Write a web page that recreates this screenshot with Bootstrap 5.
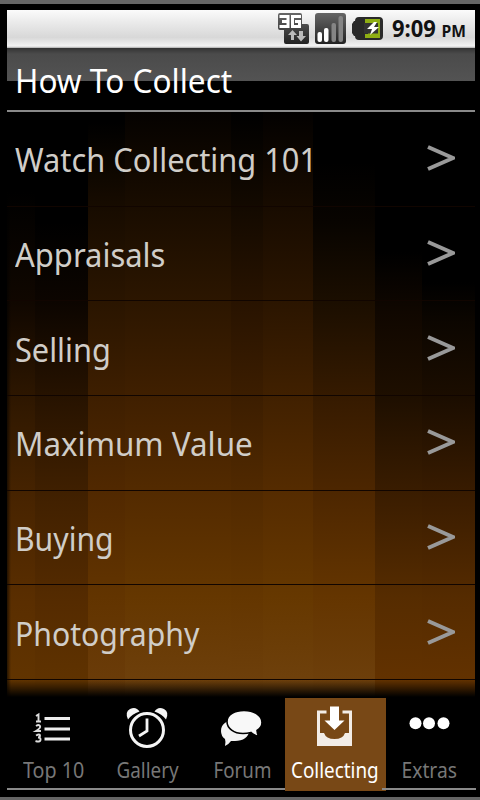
<!DOCTYPE html>
<html lang="en">
<head>
<meta charset="utf-8">
<meta name="viewport" content="width=device-width, initial-scale=1">
<title>How To Collect</title>
<link href="https://cdn.jsdelivr.net/npm/bootstrap@5.3.0/dist/css/bootstrap.min.css" rel="stylesheet">
<style>
body{font-family:"Noto Sans","Open Sans",sans-serif;background:#000;width:480px;height:800px}
.phone{width:480px;height:800px;background:#000;border-top:4px solid #666;border-bottom:3px solid #666;padding:6px 5px 0 7px}
.status{height:38px;background:linear-gradient(#fbfbfb 0,#e9e9e9 35%,#d8d8d8 72%,#e3e3e3 82%,#f3f3f3 95%,#aaa 100%);color:#111;padding-right:9px}
.clock{font:bold 22.5px/38px "Open Sans","Noto Sans",sans-serif;margin-top:1px}
.clock small{font-size:16px}
.titlebar{height:64px;background:linear-gradient(#333 0,#4b4b4b 6px,#535353 33px,#000 33px);border-bottom:2px solid #8a8a8a;padding-left:7.5px}
.fit{display:inline-block;transform-origin:left center;white-space:nowrap}
.titlebar .fit{font-size:32px;line-height:44px;color:#fff;margin-top:11px}
.topics{height:586px;
background:
linear-gradient(transparent 568px,#000 585px),
linear-gradient(90deg,#0009,transparent 4px) 0 0/4px 100% no-repeat,
linear-gradient(#000 80px,#100700 190px,#321900 300px,#482400 390px,#5a2e00 490px,#623500 586px) 0 0/28px 100% no-repeat,
linear-gradient(#000 110px,#0c0500 190px,#2b1500 300px,#422100 390px,#552b00 490px,#613400 586px) 28px 0/53px 100% no-repeat,
linear-gradient(#000 10px,#160b00 90px,#2a1500 190px,#3f1f00 290px,#522900 385px,#623400 485px,#6c3d0a 586px) 81px 0/37px 100% no-repeat,
linear-gradient(#050200 0,#180c00 90px,#2c1600 190px,#412000 290px,#542b00 385px,#653700 485px,#6f410d 586px) 118px 0/106px 100% no-repeat,
linear-gradient(#000 0,#120900 90px,#281300 190px,#3d1e00 290px,#522a00 385px,#643600 485px,#6f410d 586px) 224px 0/32px 100% no-repeat,
linear-gradient(#030100 0,#170b00 90px,#2b1500 190px,#422100 290px,#562c00 385px,#663800 485px,#70420e 586px) 256px 0/50px 100% no-repeat,
linear-gradient(#000 50px,#080400 110px,#1b0e00 190px,#371b00 290px,#4e2700 385px,#643500 485px,#6f410d 586px) 306px 0/62px 100% no-repeat,
linear-gradient(#000 140px,#100700 200px,#1e0f00 285px,#3b1d00 385px,#562c00 485px,#653300 586px) 368px 0/47px 100% no-repeat,
linear-gradient(#000 170px,#0c0600 210px,#1b0d00 285px,#3a1c00 385px,#552b00 485px,#653300 586px) 415px 0/100px 100% no-repeat}
.topic{height:94.65px;border-bottom:1px solid #110500;padding:3px 20px 0 7.5px;color:#d0cdc8;text-decoration:none}
.topic .fit{font-size:32px;line-height:44px}
.topic svg{margin-top:-4px}
.tabs{height:92px}
.tab{flex:0 0 93.6px;height:92px;border-bottom:2px solid #8a8a8a;color:#777;text-decoration:none;font-size:21px;line-height:28px}
.tab.current{flex-basis:101px;margin:0 -3.7px 0 -4.3px;background:#784816;color:#fff;height:93px;border:0}
.tab.current + .tab{flex-basis:91px}
.tab svg{height:58px;width:94px}
.tab .fit{transform-origin:center}
</style>
</head>
<body>
<div class="phone d-flex flex-column overflow-hidden">
  <header class="status d-flex align-items-center justify-content-end flex-shrink-0">
    <svg width="110" height="38" viewBox="0 0 110 38" class="me-1 flex-shrink-0" aria-hidden="true">
      <defs><linearGradient id="g" x2="0" y2="1"><stop stop-color="#666"/><stop offset="1" stop-color="#222"/></linearGradient></defs>
      <path d="M4 3H24a2 2 0 0 1 2 2V14h5a2 2 0 0 1 2 2V32a2 2 0 0 1-2 2H10a2 2 0 0 1-2-2V20H4a2 2 0 0 1-2-2V5a2 2 0 0 1 2-2z" fill="url(#g)"/>
      <path d="M3.500 6.500h8.500v10H3.500M6 11.500h6M25 6.500H16.500V16.500h7v-5H19" fill="none" stroke="#fff" stroke-width="3"/>
      <path d="M15 30V25H12L16.500 20L21 25H18V30zM23 21h4v5h3l-5 5.500L20.500 26H23z" fill="#bbb"/>
      <rect x="39" y="3" width="31" height="31" rx="3" fill="url(#g)"/>
      <rect x="41.500" y="22" width="4.500" height="10" rx="2" fill="#fff"/><rect x="48" y="18" width="4.500" height="14" rx="2" fill="#fff"/><rect x="55.500" y="13" width="4.500" height="19" rx="2" fill="#858585"/><rect x="62.500" y="6" width="4.500" height="26" rx="2" fill="#858585"/>
      <path d="M83 7H103a4 4 0 0 1 4 4V26a4 4 0 0 1-4 4H83a4 4 0 0 1-4-4h-1l-2-3V14l2-3h1a4 4 0 0 1 4-4z" fill="#292929"/>
      <path d="M89 9h15v19H89V24h3V13h-3z" fill="#8eae13"/>
      <path d="M88 13h14v10.500H88z" fill="#333"/><path d="M98 12L91 19h5l-2 6 9-8h-5l3-5z" fill="#fff"/>
    </svg>
    <span class="clock text-nowrap"><span class="fit" style="transform-origin:right">9:09 <small>PM</small></span></span>
  </header>
  <div class="titlebar flex-shrink-0"><h1 class="fit mb-0 fw-normal">How To Collect</h1></div>
  <main class="topics flex-shrink-0 overflow-hidden" id="topics"></main>
  <nav class="tabs d-flex flex-shrink-0">
    <a class="tab d-flex flex-column align-items-center" href="#">
      <svg viewBox="0 0 94 58"><g fill="none" stroke="#eee" stroke-width="3"><path d="M37.500 20.500H63M37.500 31H63M37.500 41H63"/></g><g fill="none" stroke="#ddd" stroke-width="1.900"><path d="M29 18L31.500 16.500V23.500M29 23.500H34M29 28q3-2 4 0t-4 5H34M29 37.500q4-2 4 0t-2 2q3 0 2.500 2.500t-5 1"/></g></svg>
      <span class="fit">Top 10</span></a>
    <a class="tab d-flex flex-column align-items-center" href="#">
      <svg viewBox="0 0 94 58"><circle cx="46" cy="32" r="16.500" fill="none" stroke="#f4f4f4" stroke-width="3"/><path d="M46 20.500V33L38 38" fill="none" stroke="#f4f4f4" stroke-width="2.800"/><path d="M27 21.500Q23.500 14 29 11Q35 8 38.500 13.500Q31 16 27 21.500zM65 21.500Q68.500 14 63 11Q57 8 53.500 13.500Q61 16 65 21.500z" fill="#f4f4f4"/></svg>
      <span class="fit">Gallery</span></a>
    <a class="tab d-flex flex-column align-items-center" href="#">
      <svg viewBox="0 0 94 58"><path d="M26 33c0-7 6-11 13-11s15 5 15 11-6 10-14 10q-3 0-4 0-2 3-6 5 1-4 0-7-4-3-4-8z" fill="#f4f4f4"/><path d="M49 12.500c10 0 18 5 18 12q0 5-5 8 0 3 2 6-5-1-8-4-4 1-8 1c-9 0-16-5-16-12S40 12.500 49 12.500z" fill="#f8f8f8" stroke="#000" stroke-width="1.600"/></svg>
      <span class="fit">Forum</span></a>
    <a class="tab current d-flex flex-column align-items-center" href="#" aria-current="page">
      <svg viewBox="0 0 94 58"><path d="M38.500 12.500H29V48H64V12.500H54.500v3H61V35H57q-2 6-10.500 6T36 35H32V15.500h6.500z" fill="#f2ece6"/><path d="M42 8.500h9v14h5.500L46.500 32 36.500 22.500H42z" fill="#fff"/></svg>
      <span class="fit">Collecting</span></a>
    <a class="tab d-flex flex-column align-items-center" href="#">
      <svg viewBox="0 0 94 58"><g fill="#fff"><circle cx="33.500" cy="25.300" r="6"/><circle cx="47" cy="25.300" r="6"/><circle cx="61.500" cy="25.300" r="6"/></g></svg>
      <span class="fit">Extras</span></a>
  </nav>
</div>
<script src="https://cdn.jsdelivr.net/npm/bootstrap@5.3.0/dist/js/bootstrap.bundle.min.js"></script>
<script>
const topics = [["Watch Collecting 101",302],["Appraisals",150],["Selling",96],["Maximum Value",238],["Buying",99],["Photography",184]];
document.getElementById("topics").innerHTML = topics.map(([t]) =>
  `<a class="topic d-flex align-items-center justify-content-between" href="#"><span class="fit">${t}</span><svg width="28" height="28" viewBox="0 0 28 28"><path d="M1 3L26 14L1 25" fill="none" stroke="#999" stroke-width="4"/></svg></a>`).join("");
const widths = [74, 217, ...topics.map(t => t[1]), 61, 62, 58, 88, 55];
document.querySelectorAll(".fit").forEach((el, i) => { el.style.transform = `scaleX(${widths[i] / el.offsetWidth})`; });
</script>
</body>
</html>
